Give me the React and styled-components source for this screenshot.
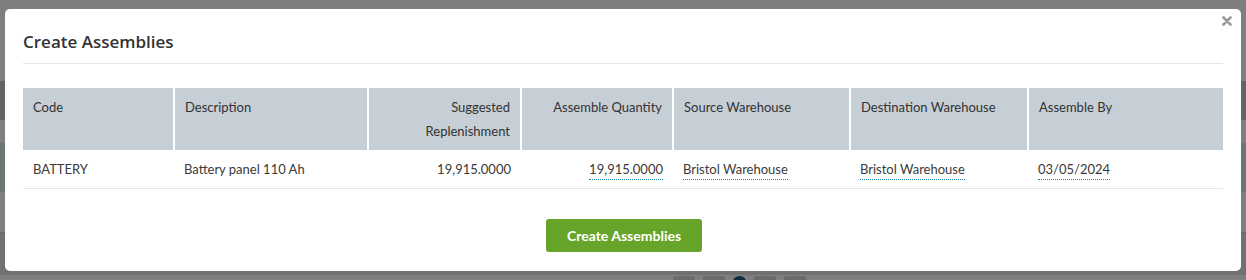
import React from "react";
import styled, { createGlobalStyle } from "styled-components";

const GlobalStyle = createGlobalStyle`
    html, body {
        margin: 0;
        padding: 0;
    }
    body {
        font-family: "Lato", "Open Sans", sans-serif;
        color: #333;
    }
`;

const Screen = styled.div`
    position: relative;
    width: 1246px;
    height: 280px;
    overflow: hidden;
    background: #ffffff;
`;

const BehindPage = styled.div`
    display: flex;
    flex-direction: column;
    height: 100%;
`;

const BehindBand = styled.div`
    flex: none;
    height: ${(p) => p.$h}px;
    background: ${(p) => p.$bg};
    border-bottom: 1px solid ${(p) => p.$line || "transparent"};
    color: ${(p) => p.$color || "#333"};
    font-size: 13px;
`;

const Pager = styled.div`
    display: flex;
    gap: 8px;
    padding-left: 673px;
    padding-top: 1px;
`;

const PageBtn = styled.span`
    width: ${(p) => (p.$active ? 13 : 22)}px;
    height: 22px;
    background: ${(p) => (p.$active ? "#1b5f7a" : "#d6d6d6")};
    border-radius: ${(p) => (p.$active ? "6px 6px 2px 2px" : "2px")};
`;

const Overlay = styled.div`
    position: absolute;
    inset: 0;
    background: rgba(0, 0, 0, 0.5);
`;

const Modal = styled.div`
    position: absolute;
    top: 9px;
    left: 5px;
    width: 1236px;
    height: 262px;
    box-sizing: border-box;
    background: #fff;
    border-radius: 5px;
    padding: 0 18px;
    display: flex;
    flex-direction: column;
`;

const CloseButton = styled.button`
    position: absolute;
    top: 7px;
    right: 9px;
    border: none;
    background: none;
    padding: 0;
    width: 10px;
    height: 10px;
    display: flex;
    cursor: pointer;
`;

const Header = styled.div`
    height: 55px;
    box-sizing: border-box;
    border-bottom: 1px solid #e5e5e5;
    display: flex;
    align-items: center;
    padding-top: 10px;
`;

const Title = styled.h4`
    margin: 0;
    font-family: "Open Sans", sans-serif;
    font-size: 17px;
    font-weight: 600;
    color: #333;
`;

const Body = styled.div`
    padding-top: 24px;
`;

const Table = styled.table`
    width: 100%;
    border-collapse: collapse;
    table-layout: fixed;
    font-size: 13px;
`;

const Th = styled.th`
    background: #c6ced6;
    color: #333;
    font-weight: 400;
    text-align: ${(p) => (p.$right ? "right" : "left")};
    vertical-align: top;
    padding: 7px 10px 0 10px;
    height: 62px;
    box-sizing: border-box;
    line-height: 24px;
    border-left: 2px solid #fff;
    &:first-child {
        border-left: none;
    }
`;

const Td = styled.td`
    height: 37px;
    padding: 0 10px 1px;
    text-align: ${(p) => (p.$right ? "right" : "left")};
    border-bottom: 1px solid #e3e6e8;
    color: #3a3a3a;
    white-space: nowrap;
`;

const Editable = styled.span`
    border-bottom: 1px dotted #1789b5;
    padding-bottom: 2px;
`;

const Footer = styled.div`
    display: flex;
    justify-content: center;
    padding-top: 30px;
    padding-left: 2px;
`;

const PrimaryButton = styled.button`
    width: 156px;
    height: 33px;
    border: none;
    border-radius: 3px;
    background: #67a52a;
    color: #fff;
    font-family: "Lato", sans-serif;
    font-weight: 700;
    font-size: 14px;
    cursor: pointer;
`;

const columns = [
    { label: "Code", width: 151 },
    { label: "Description", width: 194 },
    { label: "Suggested Replenishment", width: 153, right: true },
    { label: "Assemble Quantity", width: 152, right: true },
    { label: "Source Warehouse", width: 177 },
    { label: "Destination Warehouse", width: 178 },
    { label: "Assemble By", width: 195 },
];

const CloseIcon = () => (
    <svg width="10" height="10" viewBox="0 0 10 10">
        <path
            d="M1.5 1.5 L8.5 8.5 M8.5 1.5 L1.5 8.5"
            stroke="#9a9a9a"
            strokeWidth="2.6"
            strokeLinecap="round"
        />
    </svg>
);

const App = () => {
    return (
        <Screen>
            <GlobalStyle />
            <BehindPage>
                <BehindBand $h={80} $bg="#ffffff" />
                <BehindBand $h={38} $bg="#c8cacc" />
                <BehindBand $h={22} $bg="#ffffff" $color="#1b6f93" />
                <BehindBand $h={48} $bg="#dfe8e8" />
                <BehindBand $h={40} $bg="#ffffff" $line="#d0d0d0" />
                <BehindBand $h={41} $bg="#e2e2e2" />
                <Pager>
                    <PageBtn />
                    <PageBtn />
                    <PageBtn $active />
                    <PageBtn />
                    <PageBtn />
                </Pager>
            </BehindPage>
            <Overlay />
            <Modal role="dialog">
                <CloseButton aria-label="Close">
                    <CloseIcon />
                </CloseButton>
                <Header>
                    <Title>Create Assemblies</Title>
                </Header>
                <Body>
                    <Table>
                        <colgroup>
                            {columns.map((c) => (
                                <col key={c.label} style={{ width: c.width }} />
                            ))}
                        </colgroup>
                        <thead>
                            <tr>
                                {columns.map((c) => (
                                    <Th key={c.label} $right={c.right}>
                                        {c.label === "Suggested Replenishment" ? (
                                            <>
                                                Suggested
                                                <br />
                                                Replenishment
                                            </>
                                        ) : (
                                            c.label
                                        )}
                                    </Th>
                                ))}
                            </tr>
                        </thead>
                        <tbody>
                            <tr>
                                <Td>BATTERY</Td>
                                <Td>Battery panel 110 Ah</Td>
                                <Td $right>19,915.0000</Td>
                                <Td $right>
                                    <Editable>19,915.0000</Editable>
                                </Td>
                                <Td>
                                    <Editable>Bristol Warehouse</Editable>
                                </Td>
                                <Td>
                                    <Editable>Bristol Warehouse</Editable>
                                </Td>
                                <Td>
                                    <Editable>03/05/2024</Editable>
                                </Td>
                            </tr>
                        </tbody>
                    </Table>
                    <Footer>
                        <PrimaryButton>Create Assemblies</PrimaryButton>
                    </Footer>
                </Body>
            </Modal>
        </Screen>
    );
};

export default App;
